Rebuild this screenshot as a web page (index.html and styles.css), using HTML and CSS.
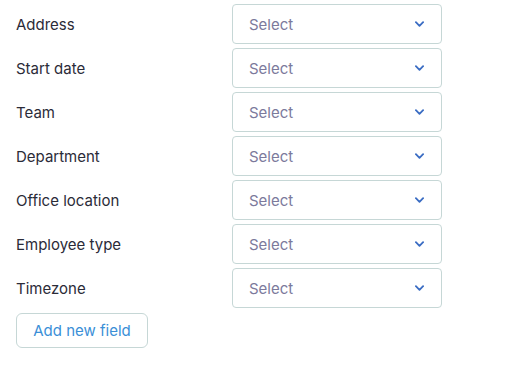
FILE: index.html
```html
<!DOCTYPE html>
<html lang="en">
  <head>
    <meta charset="UTF-8" />
    <meta name="viewport" content="width=device-width, initial-scale=1.0" />
    <title>Fields</title>
    <link rel="stylesheet" href="styles.css">
  </head>
  <body>
    <div class="fields">
      <div class="row">
        <span class="label">Address</span>
        <div class="select"><span>Select</span><svg class="chev" viewBox="0 0 10 6"><path d="M1 1l4 4 4-4" /></svg></div>
      </div>
      <div class="row">
        <span class="label">Start date</span>
        <div class="select"><span>Select</span><svg class="chev" viewBox="0 0 10 6"><path d="M1 1l4 4 4-4" /></svg></div>
      </div>
      <div class="row">
        <span class="label">Team</span>
        <div class="select"><span>Select</span><svg class="chev" viewBox="0 0 10 6"><path d="M1 1l4 4 4-4" /></svg></div>
      </div>
      <div class="row">
        <span class="label">Department</span>
        <div class="select"><span>Select</span><svg class="chev" viewBox="0 0 10 6"><path d="M1 1l4 4 4-4" /></svg></div>
      </div>
      <div class="row">
        <span class="label">Office location</span>
        <div class="select"><span>Select</span><svg class="chev" viewBox="0 0 10 6"><path d="M1 1l4 4 4-4" /></svg></div>
      </div>
      <div class="row">
        <span class="label">Employee type</span>
        <div class="select"><span>Select</span><svg class="chev" viewBox="0 0 10 6"><path d="M1 1l4 4 4-4" /></svg></div>
      </div>
      <div class="row">
        <span class="label">Timezone</span>
        <div class="select"><span>Select</span><svg class="chev" viewBox="0 0 10 6"><path d="M1 1l4 4 4-4" /></svg></div>
      </div>
    </div>
    <button class="add">Add new field</button>
  </body>
</html>
```

FILE: styles.css
```css
body {
  margin: 0;
  padding: 4px 16px;
  font-family: Inter, "Noto Sans", sans-serif;
  font-size: 15px;
  background-color: white;
}
.fields {
  display: flex;
  flex-direction: column;
  gap: 4px;
}
.row {
  display: grid;
  grid-template-columns: 216px 210px;
  align-items: center;
}
.label {
  color: #2b2b38;
}
.select {
  height: 40px;
  box-sizing: border-box;
  border: 1px solid #c6d7d6;
  border-radius: 4px;
  display: flex;
  align-items: center;
  justify-content: space-between;
  padding: 0 17px 0 16px;
  color: #7c7a9c;
}
.chev {
  width: 9px;
  height: 6px;
  fill: none;
  stroke: #3a6cc3;
  stroke-width: 2;
  stroke-linecap: round;
  stroke-linejoin: round;
}
.add {
  margin-top: 5px;
  width: 132px;
  height: 35px;
  border: 1px solid #c6d7d6;
  border-radius: 6px;
  background: white;
  font-family: inherit;
  font-size: 15px;
  color: #3b8fd7;
  padding: 0;
}
```
